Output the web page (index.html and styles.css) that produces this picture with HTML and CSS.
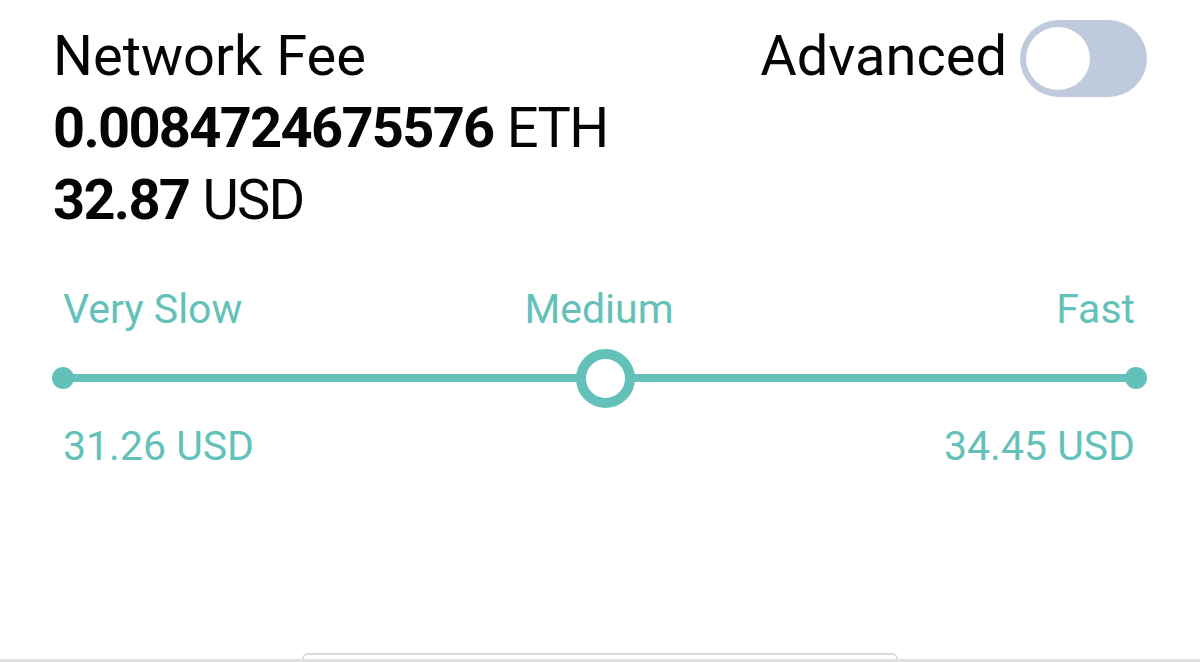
FILE: index.html
```html
<!DOCTYPE html>
<html lang="en">
<head>
<meta charset="utf-8">
<title>Network Fee</title>
<link rel="stylesheet" href="styles.css">
</head>
<body>
<div class="screen">
  <div class="content">
    <header class="fee-header">
      <div class="fee-info">
        <div class="line">Network Fee</div>
        <div class="line amount"><strong>0.0084724675576</strong> ETH</div>
        <div class="line amount"><strong>32.87</strong> USD</div>
      </div>
      <div class="advanced">
        <span class="advanced-label">Advanced</span>
        <div class="toggle"><span class="knob"></span></div>
      </div>
    </header>

    <section class="speed">
      <div class="labels">
        <span class="label-left">Very Slow</span>
        <span class="label-mid">Medium</span>
        <span class="label-right">Fast</span>
      </div>
      <div class="slider">
        <span class="dot"></span>
        <div class="track">
          <span class="thumb"></span>
        </div>
        <span class="dot"></span>
      </div>
      <div class="values">
        <span>31.26 USD</span>
        <span>34.45 USD</span>
      </div>
    </section>
  </div>

  <footer class="bottom">
    <div class="tab-row"><div class="tab"></div></div>
    <div class="rule"></div>
  </footer>
</div>
</body>
</html>
```

FILE: styles.css
```css
* { box-sizing: border-box; }

html, body {
  margin: 0;
  padding: 0;
  background: #ffffff;
}

body {
  font-family: Roboto, "Liberation Sans", sans-serif;
  color: #050505;
}

.screen {
  height: 662px;
  display: flex;
  flex-direction: column;
  overflow: hidden;
}

.content {
  flex: 1;
}

.fee-header {
  display: flex;
  justify-content: space-between;
  align-items: flex-start;
  padding: 20px 53px 0 53px;
}

.fee-info .line {
  font-size: 56px;
  line-height: 72px;
  font-weight: 400;
  white-space: nowrap;
}

.fee-info .amount {
  letter-spacing: -1.7px;
  word-spacing: 1px;
}

.fee-info strong {
  font-weight: 700;
}

.advanced {
  display: flex;
  align-items: flex-start;
  gap: 13px;
}

.advanced-label {
  font-size: 56px;
  line-height: 72px;
}

.toggle {
  width: 127px;
  height: 77px;
  border-radius: 39px;
  background: #bfcbdc;
  padding: 7px 6px;
  display: flex;
  align-items: flex-start;
}

.knob {
  width: 64px;
  height: 63px;
  border-radius: 50%;
  background: #ffffff;
}

.speed {
  margin-top: 49px;
  color: #63c1b9;
}

.labels {
  display: grid;
  grid-template-columns: 1fr auto 1fr;
  padding: 0 65px 0 63px;
  font-size: 41px;
  line-height: 48px;
}

.label-left { justify-self: start; }
.label-mid { justify-self: center; }
.label-right { justify-self: end; }

.slider {
  display: flex;
  align-items: center;
  height: 60px;
  margin-top: 15px;
  padding: 0 53px 0 52px;
}

.dot {
  flex: none;
  width: 22px;
  height: 22px;
  border-radius: 50%;
  background: #63c1b9;
}

.track {
  flex: 1;
  height: 8px;
  margin: 0 -11px;
  background: #63c1b9;
  position: relative;
}

.thumb {
  position: absolute;
  left: 50.5%;
  top: 50%;
  width: 59px;
  height: 59px;
  margin: -29px 0 0 -29px;
  border-radius: 50%;
  border: 10px solid #63c1b9;
  background: #ffffff;
}

.values {
  display: flex;
  justify-content: space-between;
  margin-top: 14px;
  padding: 0 65px 0 63px;
  font-size: 41px;
  line-height: 48px;
}

.bottom {
  flex: none;
}

.tab-row {
  display: flex;
  justify-content: center;
  height: 6px;
}

.tab {
  width: 596px;
  height: 6px;
  border: 2px solid #d8d8d8;
  border-bottom: none;
  border-radius: 9px 9px 0 0;
  background: #ffffff;
}

.rule {
  height: 3px;
  background: #e0e0e0;
}
```
